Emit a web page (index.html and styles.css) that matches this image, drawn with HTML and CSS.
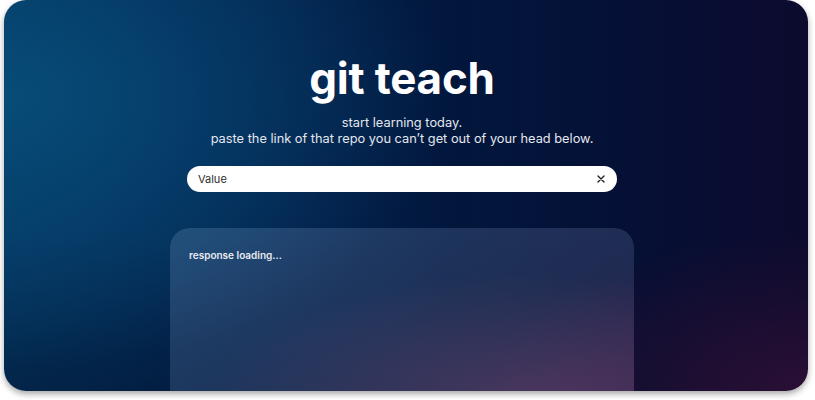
FILE: index.html
```html
<!DOCTYPE html>
<html lang="en">
<head>
<meta charset="utf-8">
<title>git teach</title>
<link rel="stylesheet" href="styles.css">
</head>
<body>
<main class="frame">
  <h1 class="title">git teach</h1>
  <p class="subtitle">start learning today.<br>paste the link of that repo you can’t get out of your head below.</p>
  <div class="search">
    <span class="search-value">Value</span>
    <svg class="search-clear" width="8" height="8" viewBox="0 0 8 8" aria-hidden="true">
      <path d="M1 1 L7 7 M7 1 L1 7" stroke="#1e1e1e" stroke-width="1.4" stroke-linecap="round"/>
    </svg>
  </div>
  <section class="response">
    <p class="response-text">response loading...</p>
  </section>
</main>
</body>
</html>
```

FILE: styles.css
```css
html, body {
  margin: 0;
  padding: 0;
  background: #ffffff;
}

body {
  width: 815px;
  height: 400px;
  overflow: hidden;
  font-family: Inter, "Noto Sans", sans-serif;
}

.frame {
  box-sizing: border-box;
  margin-left: 4px;
  width: 804px;
  height: 391px;
  border-radius: 22px;
  overflow: hidden;
  box-shadow: 0 3px 6px rgba(0, 0, 0, 0.35);
  padding: 56px 8px 0 0;
  display: flex;
  flex-direction: column;
  align-items: center;
  background:
    radial-gradient(ellipse 40% 40% at 100% 100%, rgba(52, 16, 56, 0.8) 0%, rgba(52, 16, 56, 0) 100%),
    radial-gradient(ellipse 55% 70% at 0% 25%, rgba(8, 80, 124, 0.85) 0%, rgba(8, 80, 124, 0) 100%),
    linear-gradient(180deg, rgba(0,0,0,0) 60%, rgba(0, 10, 30, 0.35) 100%),
    linear-gradient(90deg, #043460 0%, #032450 30%, #02173d 55%, #060f35 80%, #0c0b2e 100%);
}

.title {
  margin: 0;
  font-size: 44px;
  line-height: 44px;
  font-weight: 700;
  color: #ffffff;
  letter-spacing: -0.2px;
}

.subtitle {
  margin: 15px 0 0;
  font-size: 12.8px;
  line-height: 16px;
  text-align: center;
  color: #e4e7ee;
}

.search {
  margin-top: 19px;
  box-sizing: border-box;
  width: 430px;
  height: 26px;
  border-radius: 13px;
  background: #ffffff;
  display: flex;
  align-items: center;
  justify-content: space-between;
  padding: 0 12px 0 11px;
}

.search-value {
  font-size: 11px;
  color: #2c2c2c;
}

.response {
  margin-top: 36px;
  box-sizing: border-box;
  width: 464px;
  flex: 1;
  border-radius: 20px 20px 0 0;
  padding: 21px 19px;
  background:
    radial-gradient(ellipse 70% 80% at 78% 108%, rgba(180, 90, 135, 0.3) 0%, rgba(180, 90, 135, 0) 100%),
    linear-gradient(160deg, rgba(150, 190, 230, 0.2) 0%, rgba(150, 150, 210, 0.17) 100%);
}

.response-text {
  margin: 0;
  font-size: 10px;
  font-weight: 600;
  color: #e8ebf0;
}
```
